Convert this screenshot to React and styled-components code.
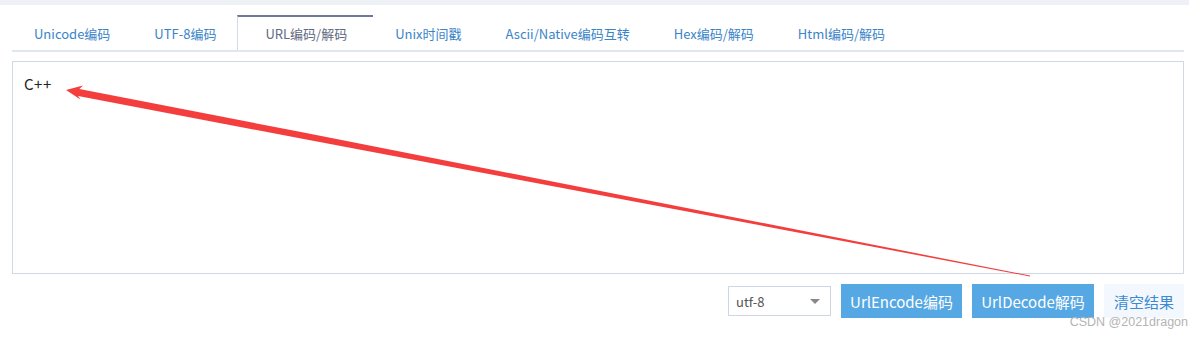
import React, { useState } from "react";
import styled, { createGlobalStyle } from "styled-components";

const GlobalStyle = createGlobalStyle`
  html, body {
    margin: 0;
    padding: 0;
    background: #fff;
    font-family: "Noto Sans CJK SC", "Noto Sans", sans-serif;
  }
`;

const tabs = [
  "Unicode编码",
  "UTF-8编码",
  "URL编码/解码",
  "Unix时间戳",
  "Ascii/Native编码互转",
  "Hex编码/解码",
  "Html编码/解码",
];

const Page = styled.div`
  position: relative;
  width: 1189px;
  height: 341px;
  overflow: hidden;
`;

const TopStrip = styled.div`
  height: 5px;
  background: #eef2f6;
`;

const Content = styled.div`
  padding: 10px 5px 0 12px;
`;

const TabBar = styled.div`
  display: flex;
  height: 35px;
  border-bottom: 2px solid #e1e7f1;
`;

const Tab = styled.div`
  display: flex;
  align-items: center;
  padding: 0 ${(p) => (p.$active ? "26px" : "21px")} 0
    ${(p) => (p.$active ? "27px" : "21px")};
  font-size: 13px;
  cursor: pointer;
  color: ${(p) => (p.$active ? "#5f6a80" : "#3a84c8")};
  background: #fff;
  border-top: 2px solid ${(p) => (p.$active ? "#6b7a99" : "transparent")};
  border-left: 1px solid ${(p) => (p.$active ? "#d3dbe8" : "transparent")};
  border-right: 1px solid ${(p) => (p.$active ? "#d3dbe8" : "transparent")};
  box-sizing: border-box;
  margin-left: ${(p) => (p.$active ? "-1px" : "0")};
  margin-right: ${(p) => (p.$active ? "-1px" : "0")};
`;

const Editor = styled.textarea`
  display: block;
  box-sizing: border-box;
  width: 1172px;
  height: 213px;
  margin-top: 9px;
  padding: 11px 11px;
  border: 1px solid #d0d7e5;
  resize: none;
  outline: none;
  font-family: "Noto Sans CJK SC", "Noto Sans", sans-serif;
  font-size: 15px;
  letter-spacing: 0.5px;
  color: #222;
`;

const Toolbar = styled.div`
  display: flex;
  justify-content: flex-end;
  align-items: center;
  gap: 10px;
  margin-top: 10px;
  width: 1172px;
`;

const SelectBox = styled.div`
  display: flex;
  align-items: center;
  justify-content: space-between;
  box-sizing: border-box;
  width: 103px;
  height: 30px;
  padding: 0 10px 0 7px;
  border: 1px solid #cfd6e3;
  font-size: 13px;
  color: #555;
  background: #fff;
`;

const Caret = styled.span`
  width: 0;
  height: 0;
  border-left: 5px solid transparent;
  border-right: 5px solid transparent;
  border-top: 5px solid #888;
`;

const Button = styled.button`
  width: ${(p) => p.$w}px;
  height: 34px;
  padding: 0;
  border: none;
  font-family: "Noto Sans CJK SC", "Noto Sans", sans-serif;
  font-size: 15px;
  cursor: pointer;
  background: ${(p) => (p.$light ? "#f2f8fd" : "#56a8e4")};
  color: ${(p) => (p.$light ? "#3c8ad0" : "#fff")};
`;

const Watermark = styled.div`
  position: absolute;
  right: 1px;
  top: 315px;
  font-family: "Liberation Sans", Arial, sans-serif;
  font-size: 12.5px;
  color: #b4b4b4;
  white-space: nowrap;
`;

const Overlay = styled.svg`
  position: absolute;
  left: 0;
  top: 0;
  pointer-events: none;
`;

const Arrow = () => (
  <Overlay width="1189" height="341" viewBox="0 0 1189 341">
    <polygon
      fill="#f43e3e"
      points="66,90 83,85.6 79.4,89 301,132 1030,275.6 1030,276.4 302.4,138.8 78.1,95.9 80.4,99.5"
    />
  </Overlay>
);

export default function App() {
  const [active, setActive] = useState(2);
  return (
    <Page>
      <GlobalStyle />
      <TopStrip />
      <Content>
        <TabBar>
          {tabs.map((t, i) => (
            <Tab key={t} $active={i === active} onClick={() => setActive(i)}>
              {t}
            </Tab>
          ))}
        </TabBar>
        <Editor defaultValue="C++" spellCheck={false} />
        <Toolbar>
          <SelectBox>
            utf-8
            <Caret />
          </SelectBox>
          <Button $w={121}>UrlEncode编码</Button>
          <Button $w={122}>UrlDecode解码</Button>
          <Button $w={80} $light>
            清空结果
          </Button>
        </Toolbar>
      </Content>
      <Arrow />
      <Watermark>CSDN @2021dragon</Watermark>
    </Page>
  );
}
